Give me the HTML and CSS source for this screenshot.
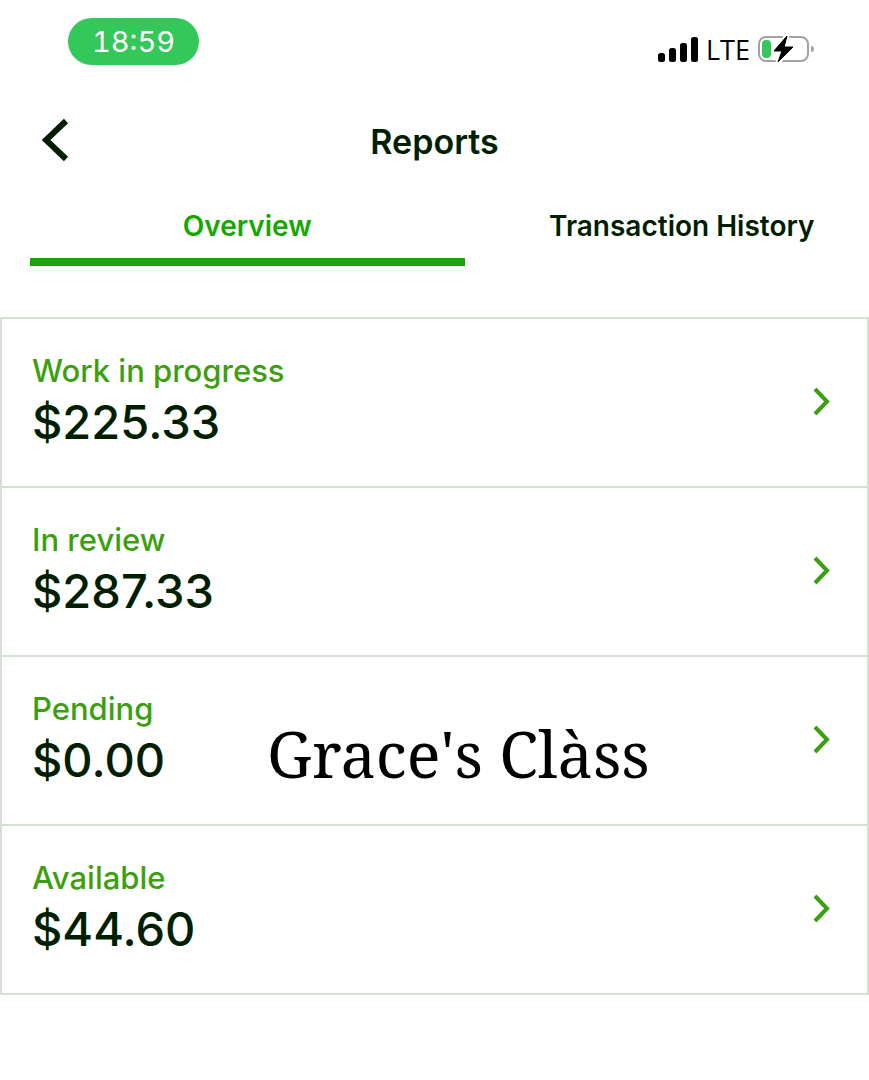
FILE: index.html
```html
<!DOCTYPE html>
<html lang="en">
<head>
<meta charset="utf-8">
<meta name="viewport" content="width=device-width, initial-scale=1">
<title>Reports</title>
<link rel="stylesheet" href="styles.css">
</head>
<body>
<div class="status-bar">
  <time class="clock">18:59</time>
  <div class="status-icons">
    <svg class="signal" width="40" height="26" viewBox="0 0 40 26" aria-hidden="true">
      <rect x="0" y="16" width="7" height="9" rx="2.5"/>
      <rect x="11" y="11" width="7" height="14" rx="2.5"/>
      <rect x="22" y="6" width="7" height="19" rx="2.5"/>
      <rect x="33" y="0" width="7" height="25" rx="2.5"/>
    </svg>
    <span class="network">LTE</span>
    <svg class="battery" width="56" height="30" viewBox="0 0 56 30" aria-hidden="true">
      <rect x="1" y="2" width="49" height="24" rx="7" fill="none" stroke="#a3a3a3" stroke-width="2"/>
      <path d="M53 11q3 0 3 3t-3 3z" fill="#a3a3a3"/>
      <rect x="4" y="5" width="9" height="18" rx="4" fill="#34c759"/>
      <path d="M29 1L16 16h8l-4 11L35 12h-9z" fill="#000" stroke="#fff" stroke-width="5" stroke-linejoin="round" paint-order="stroke"/>
      <path d="M29 1L16 16h8l-4 11L35 12h-9z" fill="#000" stroke="#000" stroke-linejoin="round"/>
    </svg>
  </div>
</div>
<header class="header">
  <button class="back" type="button" aria-label="Back">
    <svg width="28" height="44" viewBox="0 0 28 44" aria-hidden="true"><path d="M24 3L4 22l20 19" fill="none" stroke="#001e00" stroke-width="6"/></svg>
  </button>
  <h1 class="title">Reports</h1>
</header>
<nav class="tabs">
  <a class="tab tab-active" href="#overview" aria-current="page">Overview</a>
  <a class="tab" href="#history">Transaction History</a>
</nav>
<main class="balances" id="overview">
  <a class="balance" href="#progress">
    <span class="summary"><span class="label">Work in progress</span><span class="amount">$225.33</span></span>
    <svg class="chevron" width="20" height="30" viewBox="0 0 20 30" aria-hidden="true"><path d="M3 2l12 12.500L3 27"/></svg>
  </a>
  <a class="balance" href="#review">
    <span class="summary"><span class="label">In review</span><span class="amount">$287.33</span></span>
    <svg class="chevron" width="20" height="30" viewBox="0 0 20 30" aria-hidden="true"><path d="M3 2l12 12.500L3 27"/></svg>
  </a>
  <a class="balance" href="#pending">
    <span class="summary"><span class="label">Pending</span><span class="amount">$0.00</span></span>
    <span class="watermark">Grace's Clàss</span>
    <svg class="chevron" width="20" height="30" viewBox="0 0 20 30" aria-hidden="true"><path d="M3 2l12 12.500L3 27"/></svg>
  </a>
  <a class="balance" href="#available">
    <span class="summary"><span class="label">Available</span><span class="amount">$44.60</span></span>
    <svg class="chevron" width="20" height="30" viewBox="0 0 20 30" aria-hidden="true"><path d="M3 2l12 12.500L3 27"/></svg>
  </a>
</main>
</body>
</html>
```

FILE: styles.css
```css
* { box-sizing: border-box; }

body {
  margin: 0;
  background: #fff;
  color: #001e00;
  font-family: Inter, "Liberation Sans", sans-serif;
  overflow-x: hidden;
}

a { color: inherit; text-decoration: none; }

.status-bar {
  display: flex;
  justify-content: space-between;
  align-items: flex-start;
  padding: 18px 55px 0 68px;
}

.clock {
  padding: 1px 24px 0;
  border-radius: 24px;
  background: #34c759;
  color: #fff;
  font-size: 29px;
  font-variant-numeric: tabular-nums;
  line-height: 46px;
}

.status-icons {
  display: flex;
  align-items: center;
  gap: 8px;
  padding-top: 16px;
  color: #000;
}

.network {
  font-family: "Open Sans", "Noto Sans", sans-serif;
  font-size: 27px;
  font-weight: 500;
  line-height: 32px;
}

.header {
  display: grid;
  grid-template-columns: 1fr auto 1fr;
  align-items: center;
  padding: 50px 42px 0;
}

.back {
  justify-self: start;
  padding: 0;
  border: 0;
  background: none;
  line-height: 0;
}

.title {
  margin: 0;
  padding-top: 4px;
  font-size: 34px;
  font-weight: 600;
  line-height: 44px;
}

.tabs {
  display: flex;
  margin-top: 42px;
  padding-left: 30px;
}

.tab {
  flex: 0 0 50vw;
  border-bottom: 8px solid transparent;
  padding-bottom: 12px;
  font-size: 28px;
  font-weight: 600;
  line-height: 40px;
  text-align: center;
}

.tab-active { border-color: #14a800; color: #14a800; }

.balances {
  margin-top: 51px;
  border: 2px solid #d5e0d5;
}

.balance {
  position: relative;
  display: flex;
  justify-content: space-between;
  align-items: center;
  padding: 32px 35px 34px 30px;
}

.balance + .balance { border-top: 2px solid #d5e0d5; }

.summary { display: flex; flex-direction: column; }

.label {
  color: #3c9f10;
  font-size: 31px;
  font-weight: 500;
  line-height: 40px;
}

.amount {
  font-size: 47px;
  font-weight: 500;
  line-height: 61px;
}

.chevron {
  fill: none;
  stroke: #3c9f10;
  stroke-width: 4;
}

.watermark {
  position: absolute;
  top: 52px;
  left: 265px;
  color: #000;
  font-family: "Noto Serif", "Droid Serif", "Liberation Serif", serif;
  font-size: 63px;
  line-height: 90px;
  white-space: nowrap;
}
```
